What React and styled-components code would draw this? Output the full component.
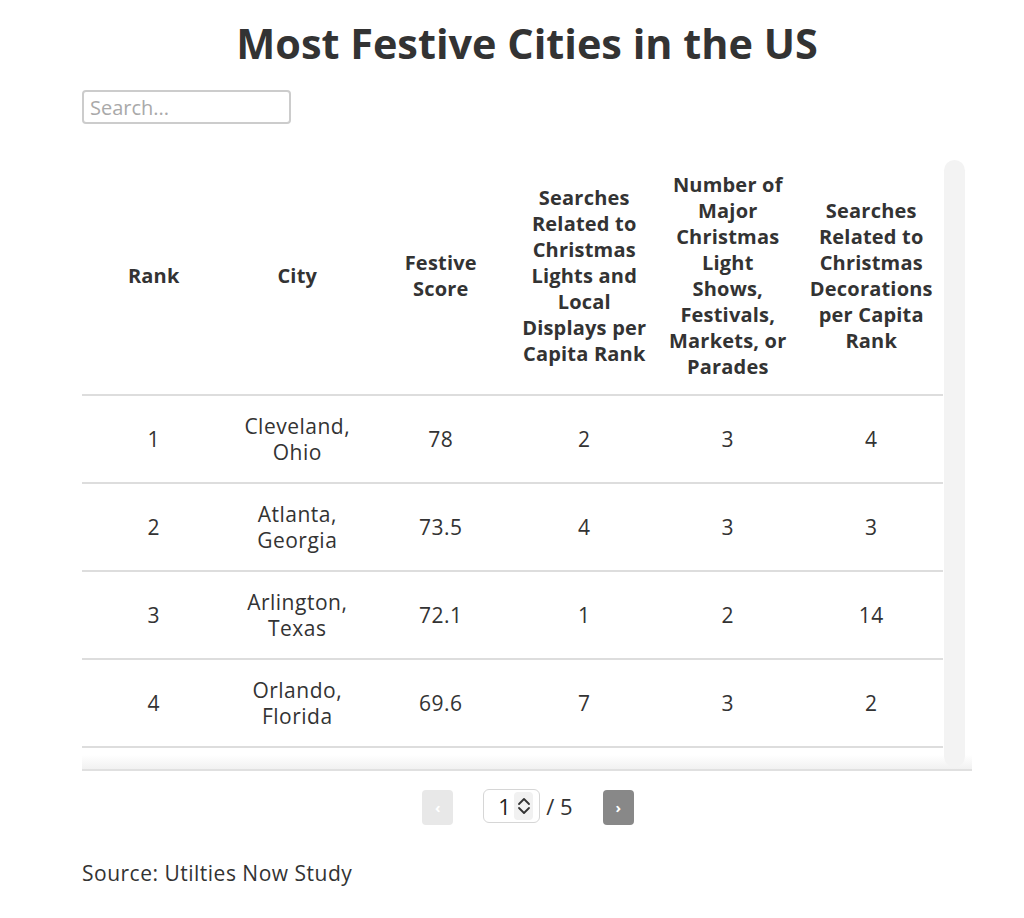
import React, { useState } from "react";
import styled, { createGlobalStyle } from "styled-components";

const GlobalStyle = createGlobalStyle`
  html, body {
    margin: 0;
    padding: 0;
    background: #ffffff;
  }
  body {
    font-family: "Open Sans", "Noto Sans", sans-serif;
    color: #333333;
  }
`;

const headers = [
  ["Rank"],
  ["City"],
  ["Festive", "Score"],
  ["Searches", "Related to", "Christmas", "Lights and", "Local", "Displays per", "Capita Rank"],
  ["Number of", "Major", "Christmas", "Light", "Shows,", "Festivals,", "Markets, or", "Parades"],
  ["Searches", "Related to", "Christmas", "Decorations", "per Capita", "Rank"],
];

// first page of the study; the fifth row sits under the fade at the bottom
const rows = [
  [1, "Cleveland, Ohio", "78", 2, 3, 4],
  [2, "Atlanta, Georgia", "73.5", 4, 3, 3],
  [3, "Arlington, Texas", "72.1", 1, 2, 14],
  [4, "Orlando, Florida", "69.6", 7, 3, 2],
  [5, "Minneapolis, Minnesota", "68.9", 3, 2, 8],
];

const Page = styled.div`
  width: 890px;
  margin-left: 82px;
  padding-bottom: 30px;
`;

const Title = styled.h1`
  margin: 16px 0 0;
  font-size: 41.4px;
  line-height: 54px;
  font-weight: 700;
  text-align: center;
  color: #333333;
`;

const Search = styled.input`
  display: block;
  box-sizing: border-box;
  margin-top: 20px;
  width: 209px;
  height: 34px;
  padding: 0 6px;
  border: 2px solid #cccccc;
  border-radius: 4px;
  font-family: "Open Sans", sans-serif;
  font-size: 20px;
  color: #333333;
  outline: none;
  &::placeholder {
    color: #a9a9a9;
  }
`;

const TableFrame = styled.div`
  position: relative;
  display: flex;
  margin-top: 36px;
  height: 611px;
`;

const Scroller = styled.div`
  flex: 0 0 861px;
  height: 100%;
  overflow-y: auto;
  scrollbar-width: none;
  &::-webkit-scrollbar {
    display: none;
  }
`;

const ScrollTrack = styled.div`
  position: relative;
  z-index: 1;
  width: 21px;
  margin: 0 7px 4px 1px;
  background: #f3f3f3;
  border-radius: 11px;
`;

const Fade = styled.div`
  position: absolute;
  left: 0;
  right: 0;
  bottom: 0;
  height: 14px;
  background: linear-gradient(to bottom, rgba(255, 255, 255, 0.7), #f1f1f1);
  border-bottom: 2px solid #e0e0e0;
  pointer-events: none;
`;

const Table = styled.table`
  width: 861px;
  table-layout: fixed;
  border-collapse: collapse;
`;

const HeadCell = styled.th`
  padding: 12px 4px 14px;
  font-size: 20px;
  line-height: 26px;
  font-weight: 700;
  letter-spacing: 0.2px;
  color: #333333;
  text-align: center;
  vertical-align: middle;
  border-bottom: 2px solid #dddddd;
  white-space: nowrap;
`;

const Cell = styled.td`
  padding: 17px 10px;
  font-size: 21px;
  line-height: 26px;
  letter-spacing: 0.5px;
  color: #333333;
  text-align: center;
  vertical-align: middle;
  border-bottom: 2px solid #dddddd;
`;

const Pager = styled.div`
  display: flex;
  align-items: center;
  justify-content: center;
  margin-top: 17px;
  height: 36px;
  padding-left: 2px;
`;

const PageButton = styled.button`
  width: 31px;
  height: 35px;
  border: none;
  border-radius: 4px;
  background: ${(p) => (p.$active ? "#888888" : "#e8e8e8")};
  color: #ffffff;
  font-family: "Open Sans", sans-serif;
  font-size: 15px;
  font-weight: 700;
  line-height: 35px;
  padding: 0;
  margin-top: 2px;
`;

const PageBox = styled.div`
  display: flex;
  align-items: center;
  box-sizing: border-box;
  width: 57px;
  height: 34px;
  margin: 0 6px 0 30px;
  padding: 0 6px 0 14px;
  border: 1px solid #d6d6d6;
  border-radius: 6px;
  font-size: 22px;
  color: #222222;
`;

const Spinner = styled.div`
  display: flex;
  flex-direction: column;
  align-items: center;
  justify-content: center;
  width: 21px;
  height: 28px;
  margin-left: 3px;
  background: #f1f1f1;
  border-radius: 4px;
`;

const PageTotal = styled.span`
  font-size: 22px;
  color: #333333;
  margin-right: 30px;
`;

const Source = styled.p`
  margin: 35px 0 0;
  font-size: 21px;
  line-height: 28px;
  letter-spacing: 0.5px;
  color: #333333;
`;

const Chevron = ({ up }) => (
  <svg width="14" height="10" viewBox="0 0 14 10" fill="none">
    <path
      d={up ? "M2 8 L7 3 L12 8" : "M2 2 L7 7 L12 2"}
      stroke="#333"
      strokeWidth="1.8"
      strokeLinecap="round"
      strokeLinejoin="round"
    />
  </svg>
);

export default function App() {
  const [query, setQuery] = useState("");
  const shown = rows.filter((r) =>
    r[1].toLowerCase().includes(query.toLowerCase())
  );

  return (
    <Page>
      <GlobalStyle />
      <Title>Most Festive Cities in the US</Title>
      <Search
        placeholder="Search..."
        value={query}
        onChange={(e) => setQuery(e.target.value)}
      />
      <TableFrame>
        <Scroller>
          <Table>
            <thead>
              <tr>
                {headers.map((lines, i) => (
                  <HeadCell key={i}>
                    {lines.map((l, j) => (
                      <div key={j}>{l}</div>
                    ))}
                  </HeadCell>
                ))}
              </tr>
            </thead>
            <tbody>
              {shown.map((r) => (
                <tr key={r[0]}>
                  {r.map((v, i) => (
                    <Cell key={i}>{v}</Cell>
                  ))}
                </tr>
              ))}
            </tbody>
          </Table>
        </Scroller>
        <ScrollTrack />
        <Fade />
      </TableFrame>
      <Pager>
        <PageButton>‹</PageButton>
        <PageBox>
          1
          <Spinner>
            <Chevron up />
            <Chevron />
          </Spinner>
        </PageBox>
        <PageTotal>/ 5</PageTotal>
        <PageButton $active>›</PageButton>
      </Pager>
      <Source>Source: Utilties Now Study</Source>
    </Page>
  );
}
